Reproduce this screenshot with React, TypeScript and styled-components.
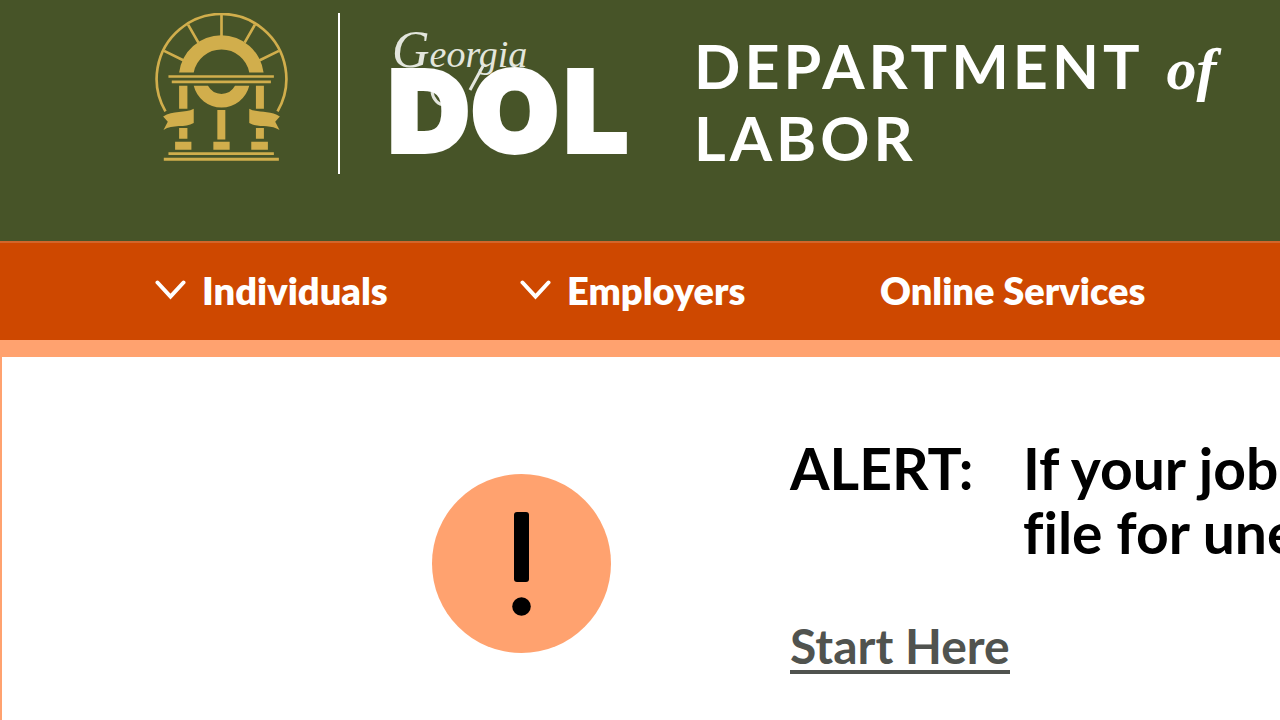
import React from "react";
import styled, { createGlobalStyle } from "styled-components";

const GlobalStyle = createGlobalStyle`
  * { box-sizing: border-box; }
  body {
    margin: 0;
    background: #fff;
    color: #000;
    font-family: Lato, "Liberation Sans", sans-serif;
    font-variant-ligatures: none;
    overflow-x: hidden;
  }
`;

const Page = styled.div`
  display: flex;
  flex-direction: column;
  min-height: 100vh;
  overflow: hidden;
`;

const Header = styled.header`
  display: flex;
  align-items: flex-start;
  padding: 13px 0 67px 155px;
  background: #475428;
`;

const Divider = styled.div`
  width: 2px;
  height: 161px;
  margin: 0 51px 0 50px;
  background: #fff;
`;

const LogoLink = styled.a`
  display: flex;
  flex: none;
  padding-top: 15px;
`;

const Title = styled.h1`
  flex: 1;
  margin: 0 0 0 60px;
  padding-top: 17px;
  color: #fff;
  font-size: 61px;
  font-weight: 700;
  line-height: 72px;
  letter-spacing: 4px;
`;

const Of = styled.em`
  font-family: "Liberation Serif", serif;
  font-size: 60px;
  line-height: 1;
  letter-spacing: 0;
  margin-left: 6px;
`;

const Nav = styled.nav`
  display: grid;
  grid-template-columns: 365px 360px auto;
  align-items: center;
  height: 99px;
  padding: 0 0 4px 155px;
  background: #ce4800;
  border-top: 2px solid #d2652a;
`;

const navText = `
  color: #fff;
  font-family: inherit;
  font-size: 38px;
  font-weight: 800;
  line-height: 48px;
`;

const NavButton = styled.button`
  ${navText}
  display: flex;
  align-items: center;
  gap: 16px;
  padding: 0;
  border: 0;
  background: none;
  cursor: pointer;
`;

const NavLink = styled.a`
  ${navText}
  text-decoration: none;
`;

const Alert = styled.section`
  display: grid;
  grid-template-columns: 788px 1fr;
  flex: 1;
  border-top: 17px solid #ffa26f;
  border-left: 2px solid #ffa26f;
`;

const AlertIcon = styled.div`
  padding: 117px 0 0 430px;
`;

const AlertBody = styled.div`
  padding-top: 79px;
`;

const AlertHeading = styled.h2`
  display: grid;
  grid-template-columns: 233px auto;
  margin: 0;
  font-size: 57px;
  font-weight: 700;
  line-height: 64px;
  white-space: nowrap;
`;

const StartLink = styled.a`
  display: inline-block;
  margin-top: 58px;
  border-bottom: 4px solid #50534f;
  color: #50534f;
  font-size: 48px;
  font-weight: 700;
  line-height: 48px;
  text-decoration: none;
`;

const Ribbon = () => (
  <path d="M161 327C136 341 98 331 69 350L83 366L70 391C98 372 135 386 161 370Z" />
);

const Crest = () => (
  <svg width="133" height="148" viewBox="45 39 399 445" fill="#d1ae4c" role="img" aria-label="State of Georgia">
    <g fill="none" stroke="#d1ae4c" strokeWidth="8">
      <path d="M76 335A195 195 0 1 1 413 335" />
      <path d="M244.500 43V112M144 74L175 128M345 74L314 128M72 153L131 182M417 153L358 182" />
    </g>
    <path d="M117 218A128 128 0 0 1 371 218H328A85 85 0 0 0 161 218Z" />
    <path d="M85 226H402V234H85ZM95 242H393V250H95Z" />
    <path d="M161 258A86 86 0 0 0 328 258H285A46 46 0 0 1 204 258Z" />
    <path d="M117 258H142V327H117ZM348 258H372V327H348ZM117 385H142V417H117ZM348 385H372V417H348ZM232 331H256V419H232Z" />
    <path d="M105 426H154V450H105ZM220 426H269V450H220ZM334 426H384V450H334Z" />
    <path d="M85 458H402V466H85ZM71 474H417V483H71Z" />
    <Ribbon />
    <g transform="translate(489 0) scale(-1 1)">
      <Ribbon />
    </g>
  </svg>
);

const LogoSvg = styled.svg`
  overflow: visible;
`;

const DolLogo = () => (
  <LogoSvg width="243" height="130" viewBox="0 0 243 130">
    <text x="1" y="39" fill="#e3e6dd" fontFamily="Liberation Serif, serif" fontStyle="italic" fontSize="38">
      <tspan fontSize="52">G</tspan>eorgia
    </text>
    <path d="M92 38L79 62M41 64C42 71 47 77 54 77" fill="none" stroke="#e3e6dd" strokeWidth="3" />
    <text x="-3 80 173" y="124" fill="#fff" stroke="#fff" strokeWidth="4" fontFamily="Inter, sans-serif" fontWeight="900" fontSize="113">
      DOL
    </text>
  </LogoSvg>
);

const Chevron = () => (
  <svg width="31" height="20" viewBox="0 0 31 20" fill="none" stroke="#fff" strokeWidth="4" strokeLinecap="round" aria-hidden="true">
    <path d="M2.500 2.500L15.500 16.500L28.500 2.500" />
  </svg>
);

const AlertMark = () => (
  <svg width="179" height="179" viewBox="0 0 179 179" role="img" aria-label="Alert">
    <circle cx="89.500" cy="89.500" r="89.500" fill="#ffa26f" />
    <rect x="82" y="38" width="15" height="70" rx="3" />
    <circle cx="89.500" cy="132.500" r="9.300" />
  </svg>
);

export default function App() {
  return (
    <Page>
      <GlobalStyle />
      <Header>
        <Crest />
        <Divider />
        <LogoLink href="#" aria-label="Georgia DOL">
          <DolLogo />
        </LogoLink>
        <Title>
          DEPARTMENT <Of>of</Of>
          <br />
          LABOR
        </Title>
      </Header>
      <Nav>
        <NavButton><Chevron />Individuals</NavButton>
        <NavButton><Chevron />Employers</NavButton>
        <NavLink href="#">Online Services</NavLink>
      </Nav>
      <Alert>
        <AlertIcon><AlertMark /></AlertIcon>
        <AlertBody>
          <AlertHeading>
            <span>ALERT:</span>
            <span>If your job<br />file for une</span>
          </AlertHeading>
          <StartLink href="#">Start Here</StartLink>
        </AlertBody>
      </Alert>
    </Page>
  );
}
